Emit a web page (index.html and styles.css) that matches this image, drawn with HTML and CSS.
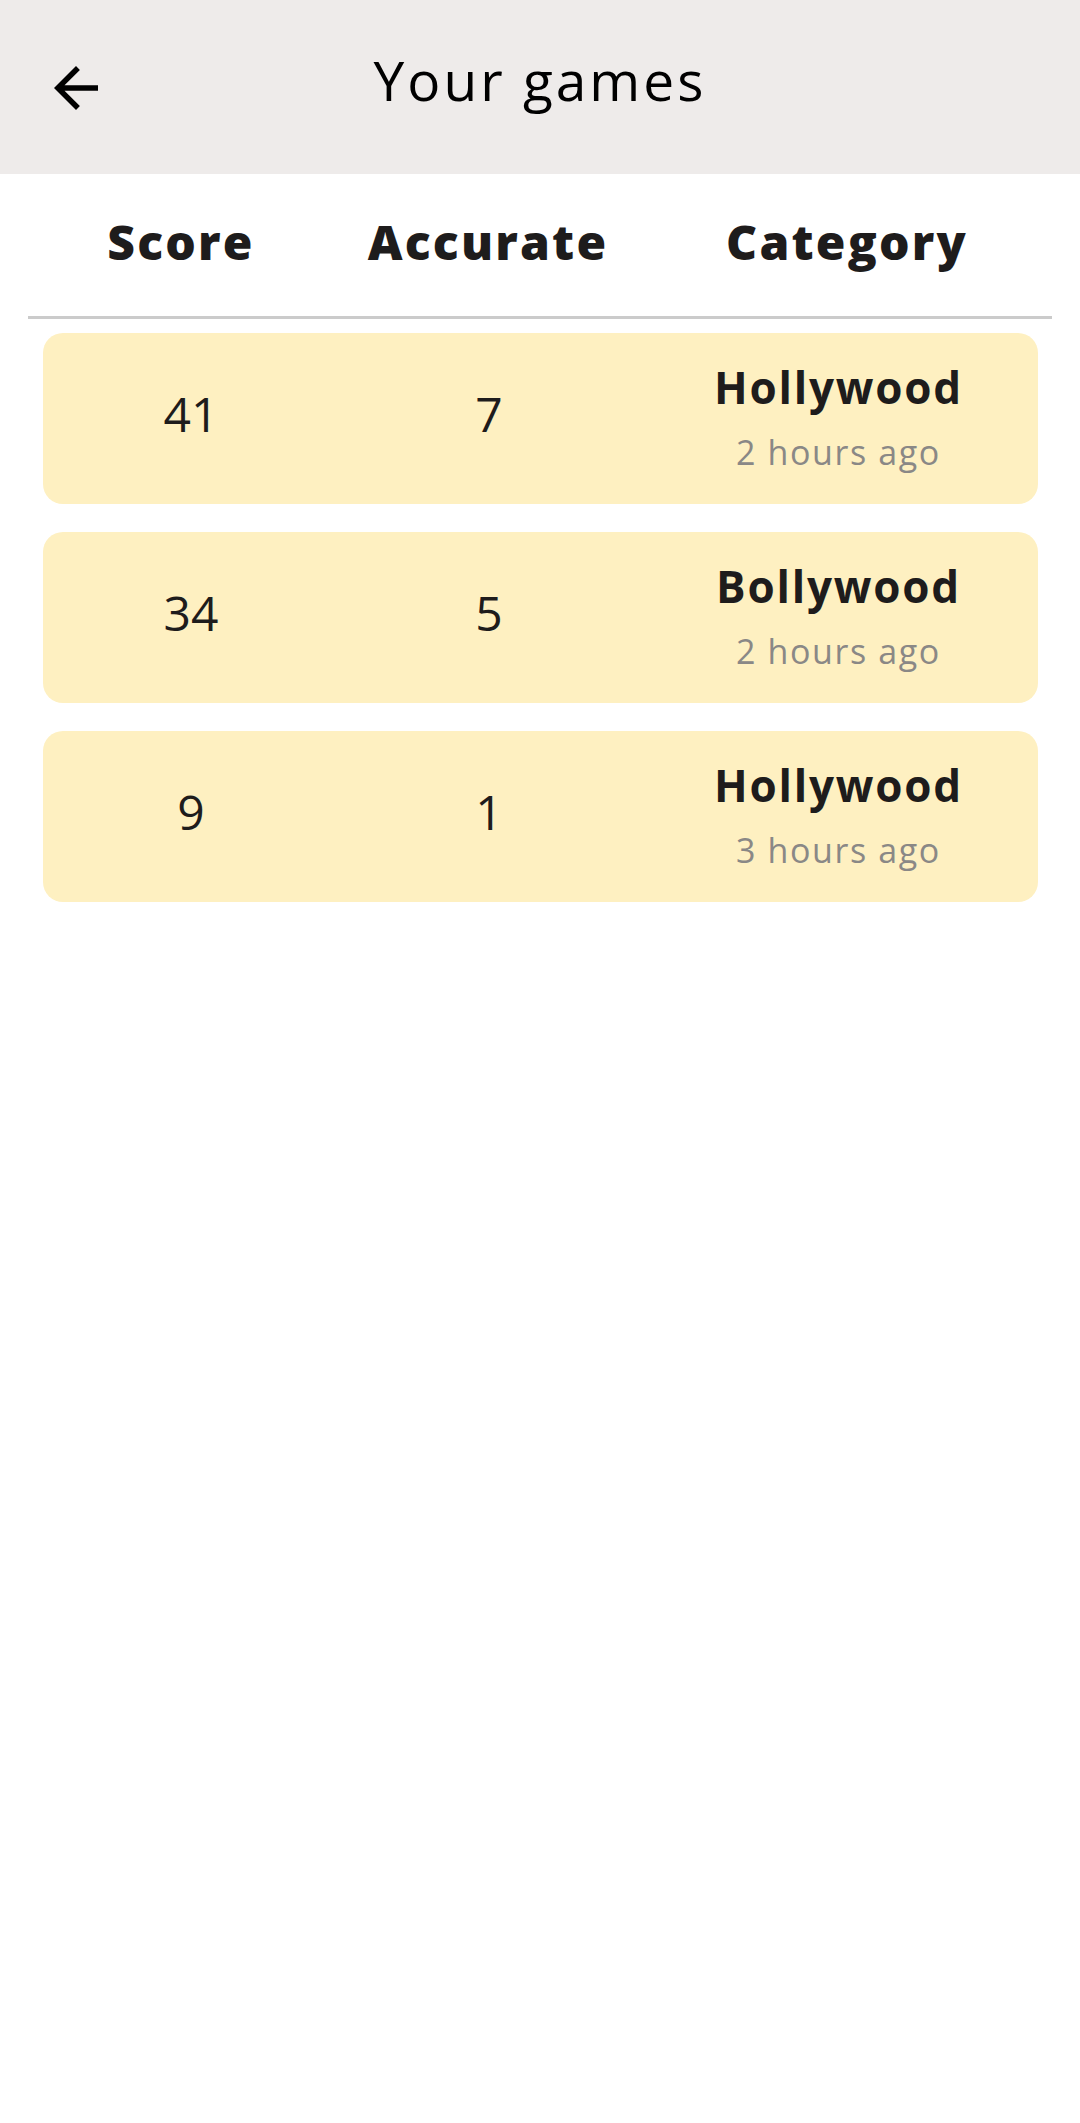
FILE: index.html
```html
<!DOCTYPE html>
<html>
<head>
<meta charset="utf-8">
<link rel="stylesheet" href="styles.css">
</head>
<body>
<header class="topbar">
  <div class="back">
    <svg width="66" height="66" viewBox="0 0 24 24"><path d="M20 11H7.83l5.59-5.59L12 4l-8 8 8 8 1.41-1.41L7.83 13H20v-2z" fill="#000"/></svg>
  </div>
  <h1 class="title">Your games</h1>
  <div></div>
</header>
<div class="cols">
  <div class="col-head">Score</div>
  <div class="col-head">Accurate</div>
  <div class="col-head">Category</div>
</div>
<div class="list">
  <div class="card">
    <div class="num">41</div>
    <div class="num">7</div>
    <div class="cat"><div class="cat-name">Hollywood</div><div class="cat-time">2 hours ago</div></div>
  </div>
  <div class="card">
    <div class="num">34</div>
    <div class="num">5</div>
    <div class="cat"><div class="cat-name">Bollywood</div><div class="cat-time">2 hours ago</div></div>
  </div>
  <div class="card">
    <div class="num">9</div>
    <div class="num">1</div>
    <div class="cat"><div class="cat-name">Hollywood</div><div class="cat-time">3 hours ago</div></div>
  </div>
</div>
</body>
</html>
```
FILE: styles.css
```css
html, body {
  margin: 0;
  padding: 0;
  background: #ffffff;
  font-family: "Open Sans", "Noto Sans", sans-serif;
  color: #1e1c1c;
}
.topbar {
  height: 174px;
  background: #eeebea;
  display: grid;
  grid-template-columns: 1fr auto 1fr;
  align-items: center;
}
.back {
  padding-left: 43px;
  padding-top: 2px;
  display: flex;
}
.title {
  margin: 0;
  font-size: 55px;
  font-weight: 400;
  letter-spacing: 3px;
  color: #000;
  line-height: 1;
  padding-bottom: 16px;
}
.cols {
  margin: 0 28px;
  height: 142px;
  border-bottom: 3px solid #cbcbcb;
  display: grid;
  grid-template-columns: 306px 308px 1fr;
  align-items: center;
}
.col-head {
  text-align: center;
  font-size: 48px;
  font-weight: 800;
  letter-spacing: 2.2px;
  line-height: 1;
  color: #1e1c1c;
  padding-bottom: 6px;
}
.list {
  margin: 14px 42px 0 43px;
  display: flex;
  flex-direction: column;
  gap: 28px;
}
.card {
  height: 171px;
  background: #fef0c1;
  border-radius: 20px;
  display: grid;
  grid-template-columns: 296px 300px 1fr;
  align-items: center;
}
.num {
  text-align: center;
  font-size: 48px;
  line-height: 1;
  padding-bottom: 10px;
}
.cat {
  text-align: center;
  display: flex;
  flex-direction: column;
  align-items: center;
  gap: 26px;
  padding-bottom: 4px;
}
.cat-name {
  font-size: 44px;
  font-weight: 700;
  letter-spacing: 1.8px;
  line-height: 1;
}
.cat-time {
  font-size: 34px;
  letter-spacing: 1.6px;
  color: #8a8886;
  line-height: 1;
}
```
